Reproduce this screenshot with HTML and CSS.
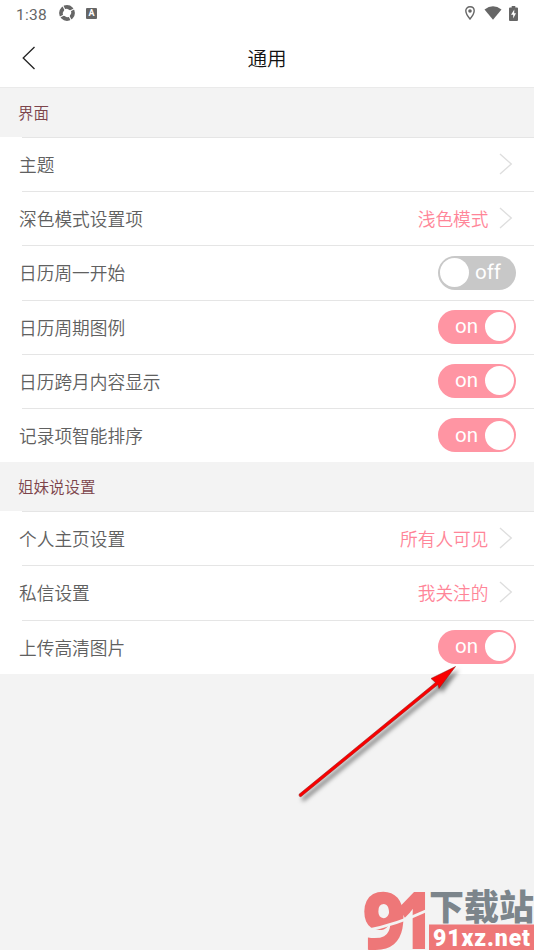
FILE: index.html
```html
<!DOCTYPE html>
<html lang="zh-CN">
<head>
<meta charset="utf-8">
<title>通用</title>
<link rel="stylesheet" href="styles.css">
</head>
<body>
<svg class="defs" width="0" height="0">
  <symbol id="chevron" viewBox="0 0 14 22"><path d="M1 1 12.3 11 1 21" fill="none" stroke="#dedede" stroke-width="1.4"/></symbol>
</svg>
<div class="status">
  <span class="time">1:38</span>
  <svg class="shutter" width="16" height="16" viewBox="0 0 16 16"><circle cx="8" cy="8" r="5.700" fill="none" stroke="#666" stroke-width="4.400"/><path d="M3.500 0 6 5M16 3.500 11 6M12.500 16 10 11M0 12.500 5 10" stroke="#fff" stroke-width="1.1"/><path d="M8 3.700 12 6 12.300 8 10 12 8 12.300 4 10 3.700 8 6 4z" fill="#fff"/></svg>
  <span class="abox">A</span>
  <svg class="pin" width="10" height="14" viewBox="0 0 10 14"><path d="M5 .7C2.500.7.8 2.500.8 4.800.8 8 5 13 5 13S9.200 8 9.200 4.800C9.200 2.500 7.500.7 5 .7z" fill="none" stroke="#666" stroke-width="1.4"/><circle cx="5" cy="5" r="1.800" fill="#666"/></svg>
  <svg class="wifi" width="18" height="14" viewBox="0 0 18 14"><path d="M.5 3.500Q9-3 17.500 3.500L9 13.800z" fill="#666"/></svg>
  <svg class="battery" width="9" height="15" viewBox="0 0 9 15"><path d="M2.700 0H6.300V1.500H8Q9 1.500 9 2.500V14Q9 15 8 15H1Q0 15 0 14V2.500Q0 1.500 1 1.500H2.700z" fill="#666"/><path d="M5.300 3.500 2 8.800H4.200V12.500L7 7.300H5.200z" fill="#fff"/></svg>
</div>
<header class="nav">
  <svg class="back" width="14" height="24" viewBox="0 0 14 24"><path d="M12.500 1 1.200 12 12.500 23" fill="none" stroke="#222" stroke-width="1.300"/></svg>
  <h1>通用</h1>
</header>
<main>
  <h2>界面</h2>
  <section>
    <div class="row"><span>主题</span><svg class="chev"><use href="#chevron"/></svg></div>
    <div class="row"><span>深色模式设置项</span><span class="value">浅色模式</span><svg class="chev"><use href="#chevron"/></svg></div>
    <div class="row"><span>日历周一开始</span><div class="toggle off"><i></i><b>off</b></div></div>
    <div class="row"><span>日历周期图例</span><div class="toggle"><b>on</b><i></i></div></div>
    <div class="row"><span>日历跨月内容显示</span><div class="toggle"><b>on</b><i></i></div></div>
    <div class="row"><span>记录项智能排序</span><div class="toggle"><b>on</b><i></i></div></div>
  </section>
  <h2>姐妹说设置</h2>
  <section>
    <div class="row"><span>个人主页设置</span><span class="value">所有人可见</span><svg class="chev"><use href="#chevron"/></svg></div>
    <div class="row"><span>私信设置</span><span class="value">我关注的</span><svg class="chev"><use href="#chevron"/></svg></div>
    <div class="row"><span>上传高清图片</span><div class="toggle"><b>on</b><i></i></div></div>
  </section>
</main>
<svg class="arrow" width="180" height="150" viewBox="290 660 180 150"><path d="M299 794.300 435.500 682.500 431 678.500 455.500 666.500 439 688.500 438 684.500 301.200 796.500Q299 797.500 299 794.300z" fill="#f90000" stroke="#8c1717" stroke-width=".5"/></svg>
<svg class="mark" width="172" height="64" viewBox="362 886 172 64">
  <text class="digits" x="362" y="949" textLength="44" lengthAdjust="spacingAndGlyphs">9</text>
  <text class="digits" x="396" y="949" textLength="37" lengthAdjust="spacingAndGlyphs">1</text>
  <path d="M364 931Q396 925 428 910" fill="none" stroke="#f3f3f3" stroke-width="3"/>
  <path d="M429 924.500H534V950H429z" fill="#ee7778"/>
  <text class="site" x="429" y="919.800" textLength="105" lengthAdjust="spacingAndGlyphs">下载站</text>
  <text class="domain" x="433" y="945.500" textLength="97" lengthAdjust="spacing">91xz.net</text>
</svg>
</body>
</html>
```
FILE: styles.css
```css
* { box-sizing: border-box; }
body { margin: 0; height: 950px; overflow: hidden; position: relative; background: #f3f3f3; color: #606060; font-family: "Noto Sans CJK SC", sans-serif; font-weight: 300; }
.defs { position: absolute; }
.status { height: 28px; padding: 0 16px 2px 16px; display: flex; align-items: center; background: #fff; }
.time { width: 43px; padding-top: 3px; font: 15.5px Roboto, sans-serif; letter-spacing: .3px; color: #666; }
.abox { width: 11px; height: 11px; margin-left: 11px; border-radius: 1px; background: #666; color: #fff; font: bold 9px/11px Roboto, sans-serif; text-align: center; }
.pin { margin-left: auto; }
.wifi { margin: 0 7px 0 9px; }
.nav { height: 60px; display: grid; grid-template-columns: 80px 1fr 80px; align-items: center; background: #fff; border-bottom: 1px solid #eaeaea; }
.back { margin-left: 22px; }
h1 { margin: 0; font-size: 19.6px; font-weight: 350; color: #111; text-align: center; }
h2 { margin: 0; height: 49px; padding-left: 18px; font-size: 15.5px; line-height: 49px; font-weight: 350; color: #7c444b; }
section { background: #fff; }
.row { height: 54.2px; padding: 0 18px 0 19px; display: flex; align-items: center; font-size: 17.7px; font-weight: 350; background: linear-gradient(#e5e5e5, #e5e5e5) 22px 0 / 100% 1px no-repeat; }
.value { margin-left: auto; color: #ff8598; }
.chev { width: 14px; height: 22px; margin-left: auto; margin-right: 3px; }
.value + .chev { margin-left: 10.5px; }
.toggle { width: 78px; height: 34px; margin-left: auto; padding: 0 2px 0 17px; border-radius: 17px; display: flex; align-items: center; justify-content: space-between; background: #ff95a3; }
.toggle.off { margin-top: 1px; background: #c8c8c8; padding: 0 15px 0 2px; }
.toggle i { width: 29px; height: 29px; border-radius: 50%; background: #fff; }
.toggle b { font: 400 20.5px/30px Roboto, sans-serif; color: #fff; padding-bottom: 1px; }
.arrow { position: absolute; left: 290px; top: 660px; filter: drop-shadow(3px 4px 2px rgba(0, 0, 0, .5)); }
.mark { position: absolute; left: 362px; top: 886px; }
.digits { font: 800 79px "Open Sans", sans-serif; fill: #ee7778; }
.site { font: 900 35px "Noto Sans CJK SC", sans-serif; fill: #7c858b; }
.domain { font: 900 23px Roboto, sans-serif; fill: #fff; }
```
